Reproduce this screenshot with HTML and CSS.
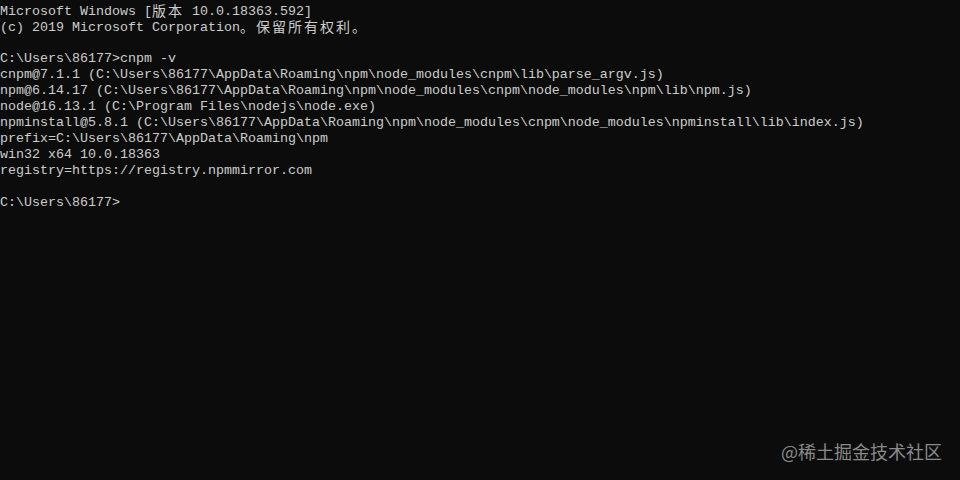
FILE: index.html
```html
<!DOCTYPE html>
<html lang="zh-CN">
<head>
  <meta charset="UTF-8">
  <title>命令提示符</title>
  <link rel="stylesheet" href="styles.css">
</head>
<body>
  <div class="console">
    <div class="line">Microsoft Windows [<span class="cjk">版本</span> 10.0.18363.592]</div>
    <div class="line">(c) 2019 Microsoft Corporation<span class="cjk">。保留所有权利。</span></div>
    <div class="line"></div>
    <div class="line">C:\Users\86177&gt;cnpm -v</div>
    <div class="line">cnpm@7.1.1 (C:\Users\86177\AppData\Roaming\npm\node_modules\cnpm\lib\parse_argv.js)</div>
    <div class="line">npm@6.14.17 (C:\Users\86177\AppData\Roaming\npm\node_modules\cnpm\node_modules\npm\lib\npm.js)</div>
    <div class="line">node@16.13.1 (C:\Program Files\nodejs\node.exe)</div>
    <div class="line">npminstall@5.8.1 (C:\Users\86177\AppData\Roaming\npm\node_modules\cnpm\node_modules\npminstall\lib\index.js)</div>
    <div class="line">prefix=C:\Users\86177\AppData\Roaming\npm</div>
    <div class="line">win32 x64 10.0.18363</div>
    <div class="line">registry=https://registry.npmmirror.com</div>
    <div class="line"></div>
    <div class="line">C:\Users\86177&gt;</div>
  </div>
  <div class="watermark">@稀土掘金技术社区</div>
</body>
</html>
```

FILE: styles.css
```css
html, body {
  margin: 0;
  padding: 0;
  height: 100%;
  background-color: #0c0c0c;
  overflow: hidden;
}

.console {
  padding-top: 3px;
  font-family: "Liberation Mono", "DejaVu Sans Mono", monospace;
  font-size: 13.333px;
  color: #cccccc;
}

.line {
  height: 16px;
  line-height: 16px;
  white-space: pre;
}

/* 中文字符占两列 */
.cjk {
  font-family: "Noto Sans CJK SC", sans-serif;
  font-size: 14px;
  letter-spacing: 2px;
  line-height: 14px;
  vertical-align: -1px;
}

/* 水印 */
.watermark {
  position: absolute;
  right: 18px;
  bottom: 18px;
  font-family: "Noto Sans CJK SC", sans-serif;
  font-size: 18px;
  line-height: 22px;
  color: #8a8a8a;
}
```
